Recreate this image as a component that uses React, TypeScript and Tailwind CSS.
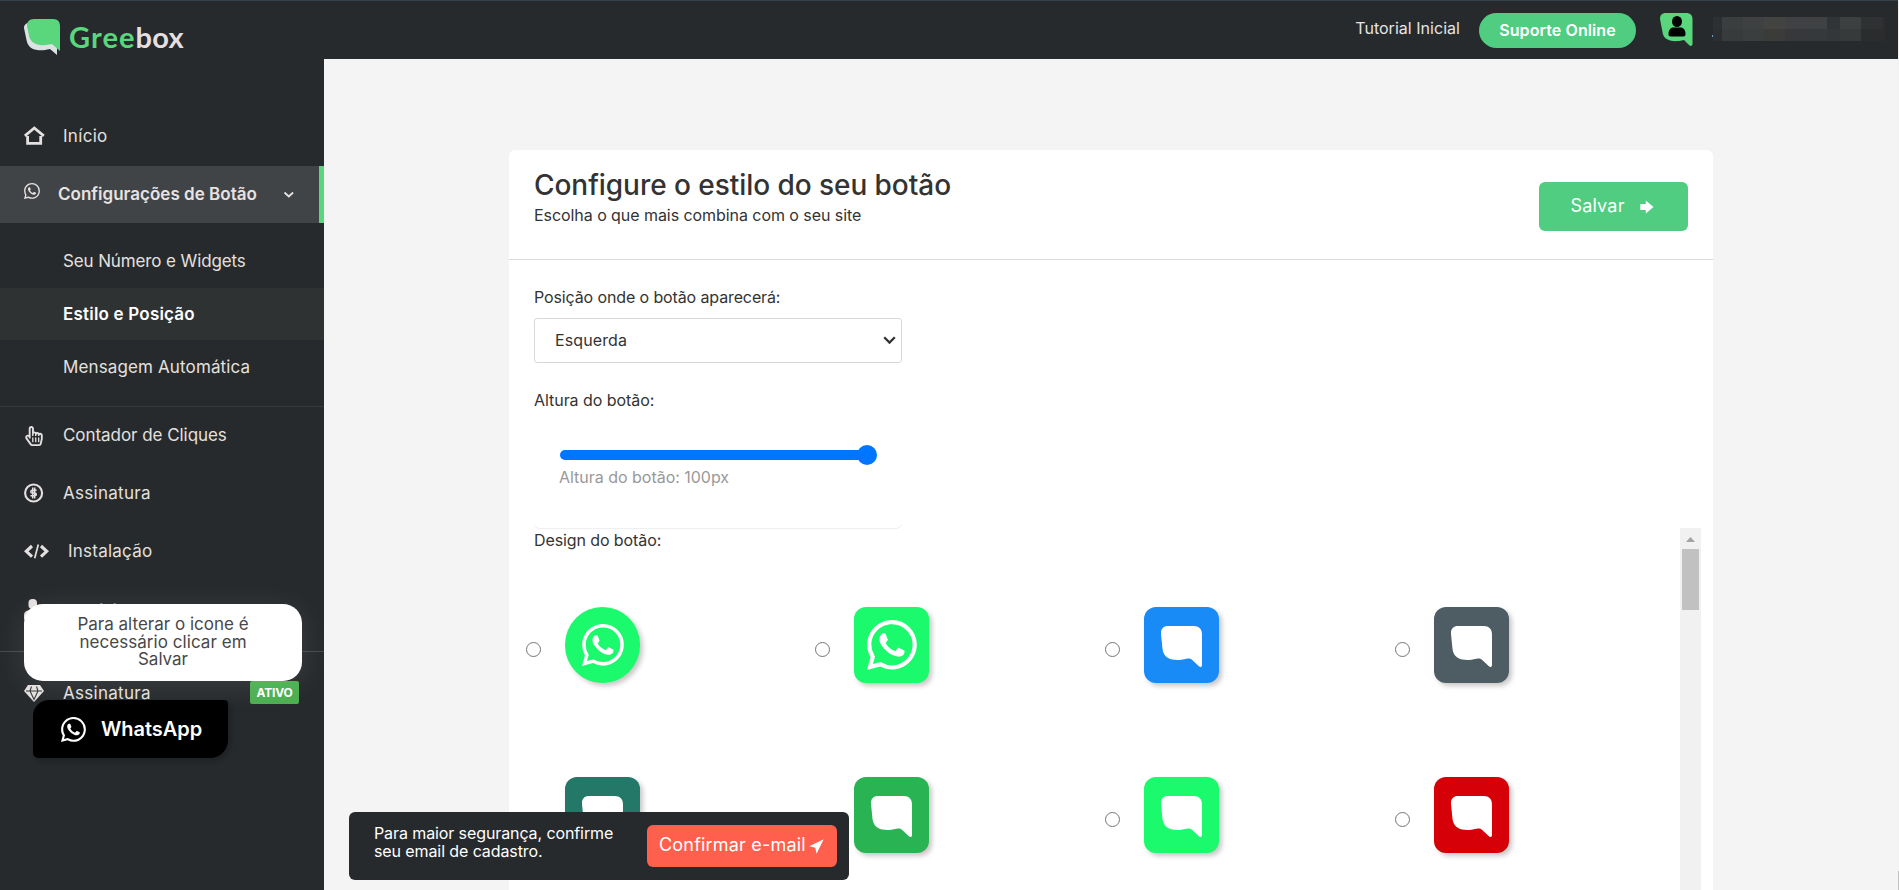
import React from 'react';
import { BsWhatsapp } from 'react-icons/bs';
import { FaRegHandPointer } from 'react-icons/fa';

const BUBBLE = 'M1 8C.6 3 3 0 8 0h25c5 0 8 3 8 8v30c0 2-1.6 2.6-3 1.300l-6.500-6C29.500 31.500 28 31.600 26 32c-6 1.200-9 1.700-14 .8C6 31.600 3 27.500 2.400 22z';

function HomeIcon() {
  return (
    <svg className="mb-0.5" width="21" height="19" viewBox="0 0 21 19" fill="none" stroke="currentColor" strokeWidth="2.8">
      <path d="M.8 9.800 10.300 2l9.500 7.800" />
      <path d="M3.600 10v7.300h13.100V10" />
    </svg>
  );
}

function DollarIcon() {
  return (
    <svg width="20" height="20" viewBox="0 0 20 20" fill="none" stroke="currentColor">
      <circle cx="9.600" cy="10" r="8.500" strokeWidth="2.100" />
      <path d="M12.600 7.300H8.200c-1.900 0-1.900 2.700 0 2.700h2.600c2 0 2 2.800 0 2.800H6.400M8.700 4.500v10.900M10.700 4.500v10.900" strokeWidth="1.500" />
    </svg>
  );
}

function CodeIcon() {
  return (
    <svg className="mt-px" width="25" height="15" viewBox="0 0 25 15" fill="none" stroke="currentColor">
      <path d="M8 2 2.300 7.300 8 12.600M17 2l5.700 5.300L17 12.600" strokeWidth="3.100" />
      <path d="M14.300.5 10.700 14.300" strokeWidth="1.700" />
    </svg>
  );
}

function GemIcon() {
  return (
    <svg width="20" height="17" viewBox="0 0 20 17">
      <path d="M4 0h12l4 6-10 11L0 6z" fill="currentColor" />
      <path d="M2 6h16M7.500 1.500 6 6l4 8.500L14 6l-1.500-4.500" fill="none" stroke="#34373a" strokeWidth="1.100" />
    </svg>
  );
}

function UserIcon() {
  return (
    <svg width="17" height="20" viewBox="0 0 17 20" fill="currentColor">
      <rect x="4.500" y="0" width="8.500" height="10" rx="4" />
      <path d="M0 20v-4c0-3 2-4 5-5h7c3 1 5 2 5 5v4z" />
    </svg>
  );
}

function Logo() {
  return (
    <div className="flex items-start">
      <svg width="37" height="37" viewBox="0 0 37 37">
        <path d="M0 9c0-3 2-5 5-5l20 10 8 10v12l-7-6c-6 1.500-9 1.500-13 1C6 30 3.500 26 2.500 21z" fill="#d9e3e2" />
        <path d="M3 7c0-4 2-7 7-7h19c5 0 7 3 7 7v25l-8-7c-4 1-8 1.500-12 1C9 25 6 21 5 17z" fill="#5ad67d" />
      </svg>
      <div className="ml-2 mt-0.5 font-[Lato,sans-serif] text-[29px] leading-8 font-bold">
        <span className="tracking-[1.1px] text-[#5ad67d]">Gree</span>
        <span className="tracking-[0.2px] text-[#e6dfe0]">box</span>
      </div>
    </div>
  );
}

type ItemProps = { icon: React.ReactNode; label: string; track: string; h?: string; gap?: string; children?: React.ReactNode };

function Item({ icon, label, track, h = 'h-[58px]', gap = '', children }: ItemProps) {
  return (
    <a className={`flex items-center pl-6 text-[17px] text-[#e4e0df] ${h}`}>
      <span className={`flex w-[39px] shrink-0 items-center ${gap}`}>{icon}</span>
      <span className={track}>{label}</span>
      {children}
    </a>
  );
}

function Sidebar() {
  return (
    <aside className="h-[890px] w-[324px] shrink-0 overflow-hidden bg-[#272a2d]">
      <div className="h-[108px] border-t border-[#344149] pt-[18px] pl-6"><Logo /></div>
      <Item icon={<HomeIcon />} label="Início" track="tracking-[0.3px]" h="h-[57px] mb-px" />
      <a className="flex h-[57px] items-center border-r-[5px] border-[#5ad67d] bg-[#414446] pl-6 text-[17px] font-semibold text-[#e8e2e1]">
        <BsWhatsapp className="mb-2 size-4 shrink-0" />
        <span className="ml-[18px] w-[203px] whitespace-nowrap tracking-[0.02px]">Configurações de Botão</span>
        <svg className="ml-[22px]" width="12" height="8" viewBox="0 0 12 8" fill="none" stroke="currentColor" strokeWidth="1.8"><path d="m1.500 1.500 4.300 4 4.300-4" /></svg>
      </a>
      <div className="border-b border-[#35393b] pt-3 pb-3 text-[17px] text-[#e4e0df]">
        <a className="flex h-[53px] items-center pl-[63px] tracking-[-0.12px]">Seu Número e Widgets</a>
        <a className="flex h-[52px] items-center bg-[#2f3233] pt-0.5 pl-[63px] font-semibold tracking-[0.2px] text-white">Estilo e Posição</a>
        <a className="flex h-[54px] items-center pt-0.5 pl-[63px] tracking-[0.13px]">Mensagem Automática</a>
      </div>
      <Item icon={<FaRegHandPointer className="size-5" />} label="Contador de Cliques" track="tracking-[-0.05px]" h="h-[57px]" />
      <Item icon={<DollarIcon />} label="Assinatura" track="mt-0.5 tracking-[0.28px]" />
      <Item icon={<CodeIcon />} label="Instalação" track="mt-0.5 tracking-[0.24px]" gap="mr-[5px]" />
      <Item icon={<UserIcon />} label="Usuário" track="mt-1.5 tracking-[0.3px]" />
      <div className="mt-[13px] border-t border-[#45494b] pt-3">
        <Item icon={<GemIcon />} label="Assinatura" track="mt-0.5 tracking-[0.28px]">
          <span className="mr-[25px] mb-0.5 ml-auto flex h-[23px] w-[49px] items-center justify-center rounded-[2px] bg-[#4caf50] pt-0.5 text-xs font-bold tracking-[-0.19px] text-white">ATIVO</span>
        </Item>
      </div>
    </aside>
  );
}

const TOP = ['bg-[#2d3033]', 'bg-[#3a3e3e]', 'bg-[#3f4041]', 'bg-[#434441]', 'bg-[#404144]', 'bg-[#404142]', 'bg-[#303437]', 'bg-[#3c4040]', 'bg-[#303133]', 'bg-[#2b2d30]'];
const BOTTOM = ['bg-[#2c2f32]', 'bg-[#373b3c]', 'bg-[#3a3e3e]', 'bg-[#3b3c39]', 'bg-[#37383b]', 'bg-[#36393b]', 'bg-[#34373a]', 'bg-[#363a3b]', 'bg-[#2a2c2e]', 'bg-[#2a2c2e]'];

function MaskedName() {
  return (
    <div className="flex flex-col">
      {[TOP, BOTTOM].map((row, i) => (
        <div key={i} className="grid h-3 w-[172px] grid-cols-[9px_21px_21px_21px_21px_21px_13px_21px_21px_3px]">
          {row.map((c, j) => <div key={j} className={c} />)}
        </div>
      ))}
    </div>
  );
}

function TopBar() {
  return (
    <header className="flex h-[59px] items-start border-t border-[#344149] bg-[#272a2d]">
      <a className="mt-[17px] ml-auto text-base leading-5 tracking-[0.03px] text-[#e6e4e4]">Tutorial Inicial</a>
      <button className="mt-3 ml-[19px] h-[35px] w-[157px] rounded-full bg-[#50cd81] pb-0.5 text-base font-semibold tracking-[0.1px] text-white">Suporte Online</button>
      <svg className="mt-3 ml-6" width="33" height="34" viewBox="0 0 33 34">
        <path d="M0 6c0-4 2-6 6-6h20c4 0 6.500 2 6.500 6v25c0 2-2 2.500-3 1.500L24 27c-6 1.500-10 1.500-14 .5C5 26 3 23 2.500 19z" fill="#5ad67d" />
        <ellipse cx="17" cy="8.500" rx="5" ry="5.500" fill="#000" />
        <path d="M8.500 21c0-4 2-6.500 5-6.500h7c3 0 5 2.500 5 6.500 0 1.700-.7 2.500-2.200 2.500H10.700c-1.500 0-2.200-.8-2.200-2.500z" fill="#000" />
      </svg>
      <div className="mt-[34px] ml-[19px] h-[2px] w-px bg-[#6fa3c4]" />
      <div className="mt-4 mr-[13px]"><MaskedName /></div>
    </header>
  );
}

const DESIGNS: { bg: string; kind: 'circle' | 'whatsapp' | 'bubble' }[] = [
  { bg: 'bg-[#1bf96c]', kind: 'circle' },
  { bg: 'bg-[#1bf96c]', kind: 'whatsapp' },
  { bg: 'bg-[#198bf7]', kind: 'bubble' },
  { bg: 'bg-[#4d5d63]', kind: 'bubble' },
  { bg: 'bg-[#237868]', kind: 'bubble' },
  { bg: 'bg-[#2ab352]', kind: 'bubble' },
  { bg: 'bg-[#1bf96c]', kind: 'bubble' },
  { bg: 'bg-[#d60008]', kind: 'bubble' },
];

function DesignOption({ bg, kind }: (typeof DESIGNS)[number]) {
  return (
    <label className="flex h-[76px] items-center">
      <span className="mt-2 size-[15px] rounded-full border border-[#767676] bg-white" />
      <span className={`ml-6 flex h-[76px] w-[75px] items-center justify-center text-white shadow-[3px_3px_5px_rgba(0,0,0,0.22)] ${kind === 'circle' ? 'rounded-full' : 'rounded-[12px]'} ${bg}`}>
        {kind === 'circle' && <BsWhatsapp className="size-[42px]" />}
        {kind === 'whatsapp' && <BsWhatsapp className="size-[50px]" />}
        {kind === 'bubble' && <svg className="mt-[3px] mr-px" width="43" height="41" viewBox="0 0 42 40" fill="currentColor"><path d={BUBBLE} /></svg>}
      </span>
    </label>
  );
}

function Card() {
  return (
    <section className="mt-[91px] ml-[185px] h-[760px] w-[1204px] rounded-t-md bg-white text-[#333]">
      <div className="flex h-[110px] justify-between border-b border-[#dcdcdc] pr-[25px] pl-[25px]">
        <div className="pt-[17px]">
          <h1 className="text-[28px] leading-9 font-medium tracking-[-0.05px]">Configure o estilo do seu botão</h1>
          <p className="mt-0.5 text-base leading-5 tracking-[-0.06px]">Escolha o que mais combina com o seu site</p>
        </div>
        <button className="mt-8 flex h-[49px] w-[149px] items-center rounded-md bg-[#50cd81] pl-[31px] text-lg tracking-[0.2px] text-white">
          <span className="-mt-px w-[55px]">Salvar</span>
          <svg className="mt-px ml-[15px]" width="14" height="14" viewBox="0 0 14 14" fill="currentColor"><path d="M.3 4h5.500V.5L13.500 7l-7.700 6.500V10H.3z" /></svg>
        </button>
      </div>
      <div className="pl-[25px]">
        <p className="pt-[27px] text-base leading-5 tracking-[-0.12px]">Posição onde o botão aparecerá:</p>
        <div className="mt-[11px] flex h-[45px] w-[368px] items-center justify-between rounded-[3px] border border-[#d8d8d8] pr-[5px] pl-[20px] text-base tracking-[0.1px]">
          <span className="-mt-0.5">Esquerda</span>
          <svg width="13" height="9" viewBox="0 0 13 9" fill="none" stroke="#333" strokeWidth="2.300"><path d="m1.200 1.200 5.300 5.300 5.300-5.300" /></svg>
        </div>
        <p className="mt-[27px] text-base leading-5 tracking-[-0.05px]">Altura do botão:</p>
        <div className="mt-2.5 h-[108px] w-[368px] rounded-md pr-[25px] pl-[26px] pt-[25px] shadow-[0_1px_1px_rgba(0,0,0,0.07)]">
          <div className="flex h-5 items-center">
            <div className="h-2.5 flex-1 rounded-l-full bg-[#0075ff]" />
            <div className="-ml-1 size-5 rounded-full bg-[#0075ff]" />
          </div>
          <p className="mt-0.5 -ml-px text-base leading-5 tracking-[-0.02px] text-[#999]">Altura do botão: 100px</p>
        </div>
      </div>
      <div className="flex h-[362px] justify-between overflow-hidden pr-3">
        <div className="pl-[17px]">
          <p className="pt-0.5 pl-2 text-base leading-5 tracking-[-0.1px]">Design do botão:</p>
          <div className="mt-[57px] grid w-[1160px] grid-cols-[289px_290px_290px_290px] gap-y-[94px]">
            {DESIGNS.map((d, i) => <DesignOption key={i} {...d} />)}
          </div>
        </div>
        <div className="-ml-10 w-[21px] shrink-0 bg-[#f1f1f1] px-0.5">
          <svg className="block" width="17" height="21" viewBox="0 0 17 21" fill="#a3a3a3"><path d="M4 14l4.500-5 4.500 5z" /></svg>
          <div className="h-[61px] bg-[#c1c1c1]" />
        </div>
      </div>
    </section>
  );
}

export default function App() {
  return (
    <div className="relative flex h-[890px] w-[1899px] overflow-hidden bg-[#f4f4f4] font-[Inter,sans-serif]">
      <Sidebar />
      <main className="w-[1574px] shrink-0">
        <TopBar />
        <Card />
      </main>
      <div className="flex w-px shrink-0 flex-col bg-[#f1f1f1] pt-[871px]"><div className="flex-1 bg-[#c1c1c1]" /></div>

      <div className="absolute top-[604px] left-6 flex h-[77px] w-[278px] flex-col items-center rounded-[19px] bg-white pt-3 text-[17px] leading-[17.700px] text-[#484848] shadow-[0_5px_30px_rgba(255,255,255,0.1)]">
        <span>Para alterar o icone é</span>
        <span className="tracking-[0.05px]">necessário clicar em</span>
        <span>Salvar</span>
      </div>

      <button className="absolute top-[700px] left-[33px] flex h-[58px] w-[195px] items-center rounded-tl-[16px] rounded-tr-[4px] rounded-br-[18px] rounded-bl-[5px] bg-black pl-7 text-xl font-semibold tracking-[-0.05px] text-white shadow-[3px_3px_5px_rgba(0,0,0,0.2)]">
        <BsWhatsapp className="size-[25px]" />
        <span className="ml-[15px]">WhatsApp</span>
      </button>

      <div className="absolute top-[812px] left-[349px] flex h-[68px] w-[500px] items-start justify-between rounded-md bg-[#272a2d] pr-3 pl-[25px] text-white">
        <p className="pt-3 text-base leading-[18px] tracking-[-0.1px]">Para maior segurança, confirme<br />seu email de cadastro.</p>
        <button className="mt-[13px] flex h-[42px] w-[190px] items-center rounded-md bg-[#fe604d] pl-3 text-lg tracking-[0.19px]">
          <span className="-mt-[3px] w-[146px] whitespace-nowrap">Confirmar e-mail</span>
          <svg className="ml-1" width="15" height="15" viewBox="0 0 15 15" fill="currentColor"><path d="M.3 7.300 14.700.3 7.600 14.700 6.300 8.700z" /></svg>
        </button>
      </div>
    </div>
  );
}
